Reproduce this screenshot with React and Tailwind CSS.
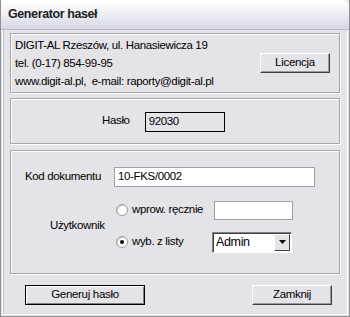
import React from "react";

const font = { fontFamily: '"Liberation Sans", Arial, sans-serif' };

function Radio({ checked }) {
  return (
    <span className="relative inline-flex h-[12px] w-[12px] items-center justify-center rounded-full border border-[#9c9c9c] bg-white shadow-[inset_1px_1px_1px_#c8c8c8]">
      {checked && <span className="h-[4px] w-[4px] rounded-full bg-black" />}
    </span>
  );
}

function Panel({ className = "", children }) {
  return (
    <div className={"border border-[#a6a6a6] shadow-[inset_1px_1px_0_#ffffff,1px_1px_0_#ffffff] " + className}>
      {children}
    </div>
  );
}

function Btn({ children, def, className = "" }) {
  return (
    <button
      className={
        "flex h-[20px] items-center justify-center text-[11.5px] tracking-[-0.3px] text-black bg-[#e4e3e8] " +
        (def
          ? "border border-black shadow-[inset_1px_1px_0_#ffffff,inset_-1px_-1px_0_#808080]"
          : "border-t border-l border-white border-b border-r border-b-[#404040] border-r-[#404040] shadow-[inset_-1px_-1px_0_#9a9a9a]") +
        " " +
        className
      }
    >
      {children}
    </button>
  );
}

export default function App() {
  return (
    <div style={font} className="w-[350px] h-[317px] bg-[#e4e3e8] text-[11.5px] text-black tracking-[-0.35px] flex flex-col border-l border-r border-b border-[#8e8e96] overflow-hidden">
      <div className="h-[30px] shrink-0 flex items-center pl-[7px] bg-[linear-gradient(#ffffff,#f2f2f6_40%,#d6d6e2)] border-b border-[#b9b9c4] rounded-tr-[6px]">
        <span className="font-bold text-[12.5px] text-[#222] tracking-[-0.4px]">Generator haseł</span>
      </div>
      <div className="flex-1 flex flex-col px-[7px] pt-[3px] border-l border-r border-b border-white ml-[1px] mr-[1px] mb-[1px] shadow-[inset_1px_0_0_#c4c4c8]">
        <Panel className="h-[60px] flex items-center pl-[4px] pr-[9px]">
          <div className="flex-1 flex flex-col leading-[18px]">
            <span>DIGIT-AL Rzeszów, ul. Hanasiewicza 19</span>
            <span>tel. (0-17) 854-99-95</span>
            <span>www.digit-al.pl,&nbsp; e-mail: raporty@digit-al.pl</span>
          </div>
          <Btn className="w-[70px]">Licencja</Btn>
        </Panel>
        <Panel className="mt-[5px] h-[46px] flex items-center">
          <span className="ml-[91px]">Hasło</span>
          <div className="ml-[15px] mt-[2px] h-[20px] w-[80px] border border-black flex items-center pl-[3px]">92030</div>
        </Panel>
        <Panel className="mt-[6px] h-[124px] flex flex-col">
          <div className="flex items-center mt-[16px]">
            <span className="ml-[14px] w-[89px]">Kod dokumentu</span>
            <div className="h-[20px] w-[201px] bg-white border border-[#a0a0a0] flex items-center pl-[3px]">10-FKS/0002</div>
          </div>
          <div className="flex items-center mt-[13px]">
            <span className="ml-[39px] w-[66px]">Użytkownik</span>
            <div className="flex flex-col">
              <div className="flex items-center h-[20px]">
                <Radio />
                <span className="ml-[4px] w-[82px]">wprow. ręcznie</span>
                <div className="h-[19px] w-[79px] bg-white border border-[#a0a0a0]" />
              </div>
              <div className="flex items-center h-[20px] mt-[12px]">
                <Radio checked />
                <span className="ml-[4px] w-[80px]">wyb. z listy</span>
                <div className="h-[21px] w-[80px] bg-white border border-t-[#808080] border-l-[#808080] border-b-white border-r-white shadow-[inset_1px_1px_0_#404040] flex items-center">
                  <span className="flex-1 pl-[3px] text-[12.5px]">Admin</span>
                  <div className="h-[17px] w-[16px] mr-[1px] bg-[#e4e3e8] border-t border-l border-white border-b border-r border-b-[#404040] border-r-[#404040] flex items-center justify-center">
                    <svg width="7" height="4" viewBox="0 0 7 4"><path d="M0 0h7L3.5 4z" fill="#000" /></svg>
                  </div>
                </div>
              </div>
            </div>
          </div>
        </Panel>
        <div className="flex items-center justify-between mt-[11px] pl-[15px] pr-[8px]">
          <Btn def className="w-[120px]">Generuj hasło</Btn>
          <Btn className="w-[80px]">Zamknij</Btn>
        </div>
      </div>
    </div>
  );
}
